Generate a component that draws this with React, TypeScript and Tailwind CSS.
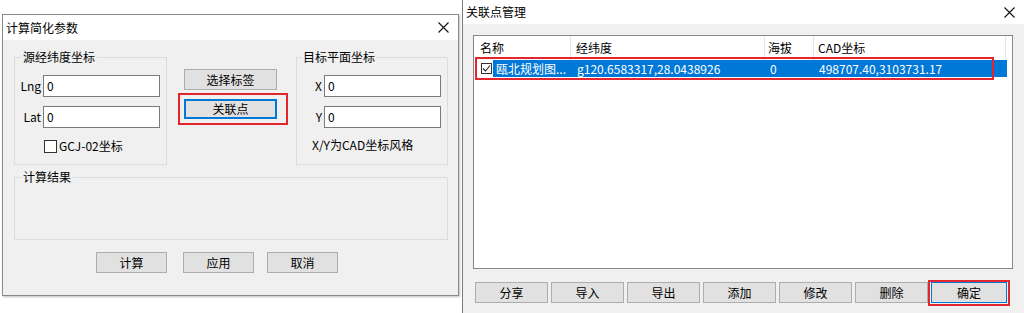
import React from "react";

function CloseX() {
  return (
    <svg width="11" height="11" viewBox="0 0 11 11" className="block">
      <path d="M0.5 0.5 L10.5 10.5 M10.5 0.5 L0.5 10.5" stroke="#111" strokeWidth="1.1" fill="none" />
    </svg>
  );
}

function Btn({ children, className = "" }: { children: React.ReactNode; className?: string }) {
  return (
    <div
      className={
        "flex items-center justify-center bg-[#e1e1e1] border border-[#adadad] text-black " + className
      }
    >
      {children}
    </div>
  );
}

function Input({ value }: { value: string }) {
  return (
    <div className="w-[117px] h-[22px] border border-[#7a7a7a] bg-white flex items-center pl-[3px]">
      {value}
    </div>
  );
}

function LeftDialog() {
  return (
    <div className="w-[457px] h-[282px] border border-[#8a8a8a] flex flex-col shadow-[1px_1px_2px_rgba(0,0,0,0.25)]">
      <div className="h-[25px] bg-white flex items-center justify-between pl-[3px] pr-[9px]">
        <span>计算简化参数</span>
        <CloseX />
      </div>
      <div className="flex-1 bg-[#f0f0f0] pt-[17px] pl-[11px] flex flex-col">
        <div className="flex items-start">
          {/* group 1 */}
          <div className="w-[153px] h-[108px] border border-[#dcdcdc] flex flex-col">
            <span className="-mt-[9px] ml-[6px] px-[2px] bg-[#f0f0f0] self-start">源经纬度坐标</span>
            <div className="mt-[10px] flex items-center">
              <div className="w-[28px] text-right pr-[2px]">Lng</div>
              <Input value="0" />
            </div>
            <div className="mt-[9px] flex items-center">
              <div className="w-[28px] text-right pr-[2px]">Lat</div>
              <Input value="0" />
            </div>
            <div className="mt-[10px] flex items-center ml-[29px]">
              <div className="w-[13px] h-[13px] border border-[#333] bg-white" />
              <span className="ml-[2px]">GCJ-02坐标</span>
            </div>
          </div>
          {/* middle */}
          <div className="ml-[17px] w-[93px] pt-[12px] flex flex-col">
            <Btn className="h-[21px]">选择标签</Btn>
            <div className="relative mt-[9px]">
              <div className="h-[20px] flex items-center justify-center bg-[#e1e1e1] border-2 border-[#0078d7]">
                关联点
              </div>
              <div className="absolute -top-[6px] -bottom-[6px] -left-[6px] -right-[11px] border-2 border-[#e3262e]" />
            </div>
          </div>
          {/* group 2 */}
          <div className="ml-[19px] w-[152px] h-[108px] border border-[#dcdcdc] flex flex-col">
            <span className="-mt-[9px] ml-[5px] px-[1px] bg-[#f0f0f0] self-start">目标平面坐标</span>
            <div className="mt-[10px] flex items-center">
              <div className="w-[27px] text-right pr-[2px]">X</div>
              <Input value="0" />
            </div>
            <div className="mt-[9px] flex items-center">
              <div className="w-[27px] text-right pr-[2px]">Y</div>
              <Input value="0" />
            </div>
            <div className="mt-[9px] ml-[15px]">X/Y为CAD坐标风格</div>
          </div>
        </div>
        {/* group 3 */}
        <div className="mt-[12px] w-[434px] h-[63px] border border-[#dcdcdc] flex flex-col">
          <span className="-mt-[9px] ml-[6px] px-[2px] bg-[#f0f0f0] self-start">计算结果</span>
        </div>
        {/* buttons */}
        <div className="mt-[12px] flex ml-[82px]">
          <Btn className="w-[71px] h-[21px]">计算</Btn>
          <Btn className="w-[71px] h-[21px] ml-[16px]">应用</Btn>
          <Btn className="w-[71px] h-[21px] ml-[13px]">取消</Btn>
        </div>
      </div>
    </div>
  );
}

function RightDialog() {
  const buttons = ["分享", "导入", "导出", "添加", "修改", "删除"];
  return (
    <div className="flex-1 h-[313px] border-l border-[#7b7b7b] flex flex-col">
      <div className="h-[24px] bg-white flex items-center justify-between pl-[3px] pr-[9px]">
        <span>关联点管理</span>
        <CloseX />
      </div>
      <div className="flex-1 bg-[#f0f0f0] pt-[11px] pl-[10px] flex flex-col">
        <div className="w-[540px] h-[234px] border border-[#828790] bg-white flex flex-col">
          <div className="h-[24px] flex items-stretch">
            <div className="w-[97px] border-r border-[#e5e5e5] flex items-center pl-[6px]">名称</div>
            <div className="w-[194px] border-r border-[#e5e5e5] flex items-center pl-[5px]">经纬度</div>
            <div className="w-[49px] border-r border-[#e5e5e5] flex items-center pl-[3px]">海拔</div>
            <div className="w-[192px] border-r border-[#e5e5e5] flex items-center pl-[4px]">CAD坐标</div>
          </div>
          <div className="relative h-[17px] w-[533px] flex">
            <div className="w-[19px] flex items-center pl-[7px]">
              <div className="w-[11px] h-[11px] border border-[#333] bg-white flex items-center justify-center">
                <svg width="9" height="9" viewBox="0 0 9 9" className="block">
                  <path d="M1 4.5 L3.5 7 L8 1.5" stroke="#222" strokeWidth="1.1" fill="none" />
                </svg>
              </div>
            </div>
            <div className="flex-1 bg-[#0078d7] text-white flex items-center">
              <div className="w-[78px] pl-[3px] whitespace-nowrap">瓯北规划图...</div>
              <div className="w-[194px] pl-[6px] whitespace-nowrap">g120.6583317,28.0438926</div>
              <div className="w-[49px] pl-[5px]">0</div>
              <div className="pl-[5px] whitespace-nowrap">498707.40,3103731.17</div>
            </div>
            <div className="absolute -top-[3px] -bottom-[3px] left-[1px] right-[13px] border-2 border-[#e3262e]" />
          </div>
        </div>
        <div className="mt-[13px] ml-[2px] flex gap-[3px]">
          {buttons.map((b) => (
            <Btn key={b} className="w-[73px] h-[21px]">
              {b}
            </Btn>
          ))}
          <div className="relative">
            <div className="w-[76px] h-[21px] flex items-center justify-center bg-[#e1e1e1] border border-[#0078d7]">
              确定
            </div>
            <div className="absolute -top-[2px] -bottom-[3px] -left-[3px] -right-[3px] border-2 border-[#e3262e]" />
          </div>
        </div>
      </div>
    </div>
  );
}

export default function App() {
  return (
    <div className="flex w-[1024px] h-[313px] bg-white overflow-hidden text-[12px] leading-[16px] text-black font-['Noto_Sans_CJK_SC',sans-serif]">
      <div className="w-[462px] shrink-0 pt-[14px] pl-[2px]">
        <LeftDialog />
      </div>
      <RightDialog />
    </div>
  );
}
